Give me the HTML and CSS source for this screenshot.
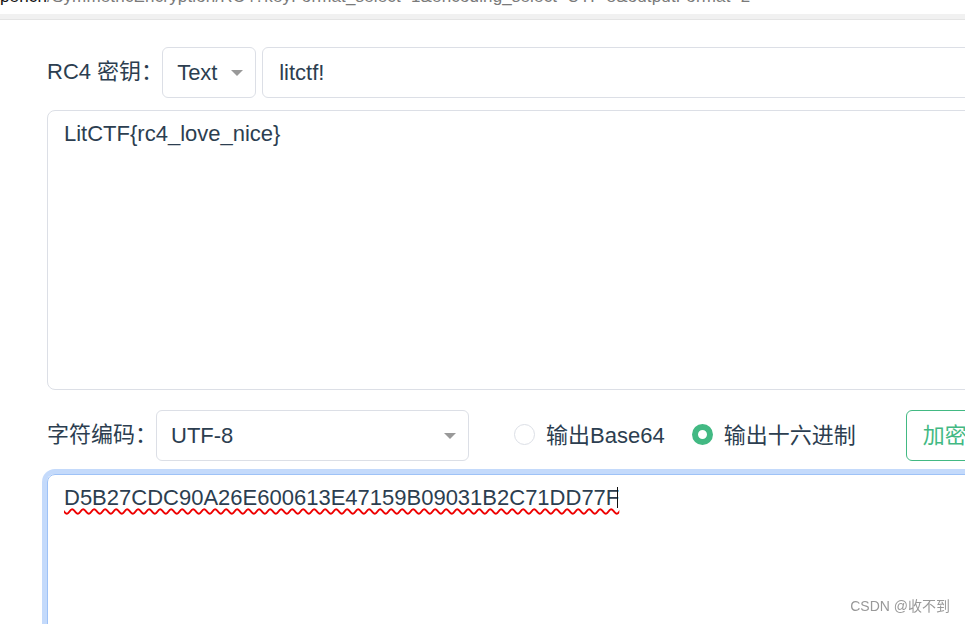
FILE: index.html
```html
<!DOCTYPE html>
<html lang="zh-CN">
<head>
    <meta charset="UTF-8">
    <meta name="viewport" content="width=device-width, initial-scale=1.0">
    <title>RC4 加密</title>
    <link rel="stylesheet" href="styles.css">
</head>
<body>
    <div class="urlbar">
        <div class="urlbar-text"><span class="url-dark">pench</span>/SymmetricEncryption/RC4?keyFormat_select=1&amp;encoding_select=UTF-8&amp;outputFormat=2</div>
    </div>
    <div class="tabstrip"></div>
    <div id="app">
        <div class="row">
            <span class="label">RC4 密钥：</span>
            <div class="select select-key">
                <span class="select-value">Text</span>
                <span class="caret"></span>
            </div>
            <div class="input">litctf!</div>
        </div>
        <div class="textarea plain">LitCTF{rc4_love_nice}</div>
        <div class="row row-options">
            <span class="label">字符编码：</span>
            <div class="select select-encoding">
                <span class="select-value">UTF-8</span>
                <span class="caret"></span>
            </div>
            <div class="radio-group">
                <label class="radio"><span class="radio-dot"></span>输出Base64</label>
                <label class="radio checked"><span class="radio-dot"></span>输出十六进制</label>
            </div>
            <button class="btn-encrypt">加密</button>
        </div>
        <div class="textarea output focused"><span class="misspelled">D5B27CDC90A26E600613E47159B09031B2C71DD77F</span><span class="cursor"></span></div>
    </div>
    <div class="watermark">CSDN @收不到</div>
</body>
</html>
```
FILE: styles.css
```css
body, html {
    margin: 0;
    padding: 0;
    height: 100%;
    overflow: hidden;
    background: #fff;
    font-family: "Liberation Sans", Arial, "Noto Sans CJK SC", sans-serif;
    color: #2c3e50;
}
.urlbar {
    height: 14px;
    overflow: hidden;
}
.urlbar-text {
    margin-top: -13px;
    line-height: 20px;
    font-size: 17px;
    letter-spacing: 0.15px;
    color: #7a7a7a;
    white-space: nowrap;
}
.url-dark {
    color: #111;
}
.tabstrip {
    height: 5px;
    background-color: #f1f1f1;
    border-bottom: 1px solid #e4e4e4;
}
#app {
    width: 1100px;
    padding: 27px 0 0 47px;
    font-size: 22px;
}
.row {
    display: flex;
    align-items: center;
    height: 51px;
}
.label {
    margin-right: -1px;
    white-space: nowrap;
    line-height: 1;
    margin-top: -1px;
}
.select, .input, .btn-encrypt {
    box-sizing: border-box;
    height: 51px;
    border: 1px solid #dcdfe6;
    border-radius: 6px;
    background: #fff;
}
.select {
    display: flex;
    align-items: center;
    justify-content: space-between;
    padding: 0 12px 0 14px;
}
.select-value {
    margin-top: 1px;
}
.select-key {
    width: 94px;
    margin-right: 6px;
}
.select-encoding {
    width: 313px;
}
.caret {
    width: 0;
    height: 0;
    border-left: 6px solid transparent;
    border-right: 6px solid transparent;
    border-top: 6px solid #999;
}
.input {
    flex: 1;
    display: flex;
    align-items: center;
    padding: 0 16px;
}
.textarea {
    box-sizing: border-box;
    border: 1px solid #dcdfe6;
    border-radius: 8px;
    padding: 8px 16px;
    line-height: 30px;
}
.plain {
    margin-top: 12px;
    height: 280px;
}
.row-options {
    margin-top: 20px;
}
.radio-group {
    display: flex;
    align-items: center;
    gap: 27px;
    margin-left: 45px;
}
.radio {
    display: flex;
    align-items: center;
    gap: 11px;
    line-height: 1;
}
.radio-dot {
    box-sizing: border-box;
    width: 21px;
    height: 21px;
    border: 1px solid #dcdfe6;
    border-radius: 50%;
    background: #fff;
    margin-top: -2px;
}
.radio.checked .radio-dot {
    border: 6px solid #42b983;
    background: #fff;
}
.btn-encrypt {
    margin-left: 50px;
    padding: 0 16px;
    border-color: #42b983;
    color: #42b983;
    font: inherit;
    font-size: 22px;
    line-height: 1;
}
.output {
    margin-top: 13px;
    height: 200px;
    border-color: #9ec2f7;
    box-shadow: 0 0 0 5px #c4dafb;
}
.misspelled {
    text-decoration: underline wavy #e00;
    text-decoration-thickness: 1.5px;
    text-underline-offset: 3px;
    text-decoration-skip-ink: none;
}
.cursor {
    display: inline-block;
    width: 1px;
    height: 21px;
    margin-left: -2px;
    vertical-align: -3px;
    background: #111;
}
.watermark {
    position: fixed;
    right: 15px;
    bottom: 9px;
    font-size: 14px;
    color: #999;
}
```
